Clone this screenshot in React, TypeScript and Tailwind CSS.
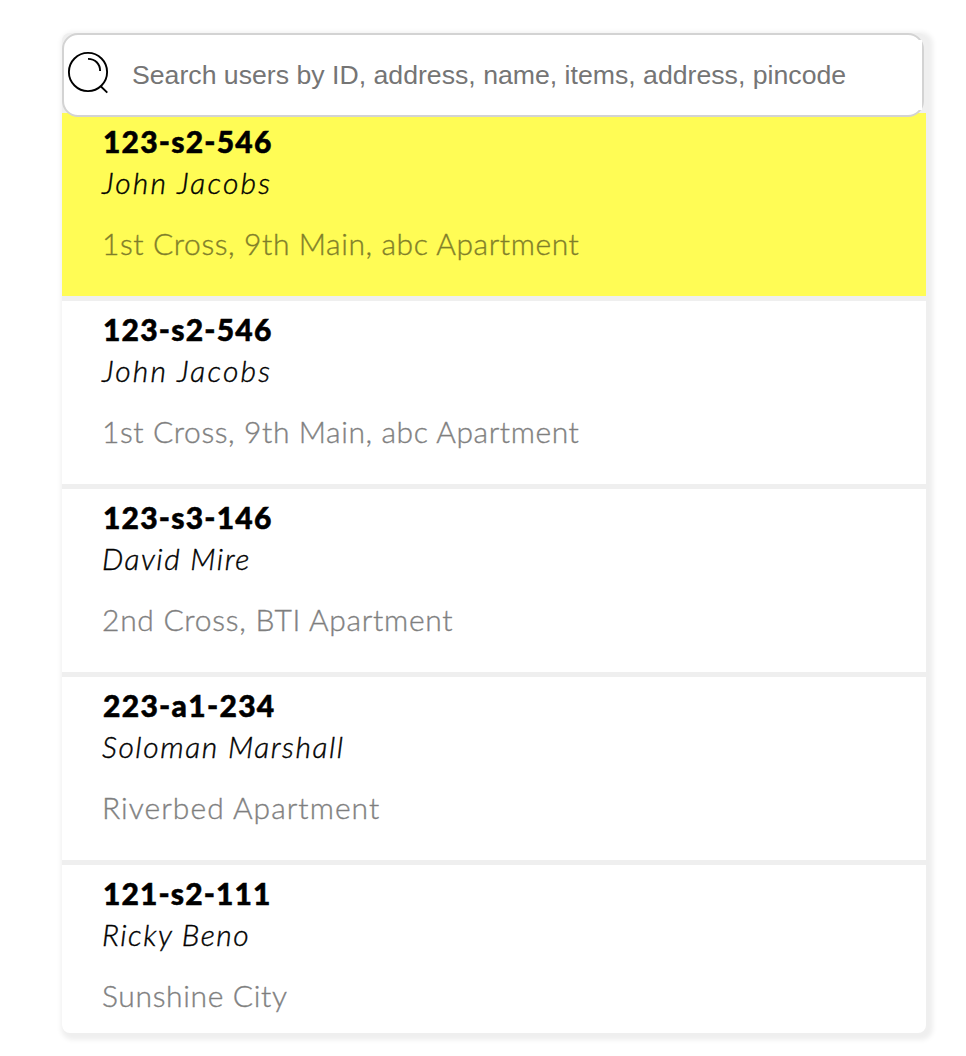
type Line = { text: string; tracking: string };
type User = { key: number; id: Line; name: Line; address: Line; active?: boolean };

const users: User[] = [
  {
    key: 1,
    id: { text: "123-s2-546", tracking: "tracking-[1.2px]" },
    name: { text: "John Jacobs", tracking: "tracking-[2.15px]" },
    address: { text: "1st Cross, 9th Main, abc Apartment", tracking: "tracking-[0.6px]" },
    active: true,
  },
  {
    key: 2,
    id: { text: "123-s2-546", tracking: "tracking-[1.2px]" },
    name: { text: "John Jacobs", tracking: "tracking-[2.15px]" },
    address: { text: "1st Cross, 9th Main, abc Apartment", tracking: "tracking-[0.6px]" },
  },
  {
    key: 3,
    id: { text: "123-s3-146", tracking: "tracking-[1.2px]" },
    name: { text: "David Mire", tracking: "tracking-[1.5px]" },
    address: { text: "2nd Cross, BTI Apartment", tracking: "tracking-[0.73px]" },
  },
  {
    key: 4,
    id: { text: "223-a1-234", tracking: "tracking-[1.3px]" },
    name: { text: "Soloman Marshall", tracking: "tracking-[1.58px]" },
    address: { text: "Riverbed Apartment", tracking: "tracking-[1.05px]" },
  },
  {
    key: 5,
    id: { text: "121-s2-111", tracking: "tracking-[1.1px]" },
    name: { text: "Ricky Beno", tracking: "tracking-[1.5px]" },
    address: { text: "Sunshine City", tracking: "tracking-[0.65px]" },
  },
];

function SearchIcon() {
  return (
    <svg width="44" height="44" viewBox="0 0 44 44" fill="none" stroke="#000" strokeWidth="1.9" className="shrink-0">
      <circle cx="22" cy="22" r="19.1" />
      <path d="M22 8.9c7.2 0 12.1 5 12.1 12.1M34.7 36.2l6.6 6.4" />
    </svg>
  );
}

function UserRow({ user }: { user: User }) {
  return (
    <li
      className={`flex h-[188px] flex-col border-b-[5px] border-[#efefef] pl-10 pt-2 text-[30px] last:h-[168px] last:rounded-b-lg last:border-b-0 ${
        user.active ? "bg-[#fffc55]" : "bg-white"
      }`}
    >
      <div className={`h-[41px] whitespace-nowrap pl-px font-black leading-[41px] text-black [-webkit-text-stroke:0.5px_#000] ${user.id.tracking}`}>
        {user.id.text}
      </div>
      <div className={`h-[41px] whitespace-nowrap font-light italic leading-[41px] text-black [-webkit-text-stroke:0.4px_#000] ${user.name.tracking}`}>
        {user.name.text}
      </div>
      <div
        className={`mt-5 h-[41px] whitespace-nowrap font-light leading-[41px] text-black opacity-50 [-webkit-text-stroke:0.4px_#000] ${user.address.tracking}`}
      >
        {user.address.text}
      </div>
    </li>
  );
}

export default function App() {
  return (
    <main className="min-h-[1056px] bg-white pl-[62px] pt-[33px] font-['Lato',sans-serif]">
      <section className="w-[864px] rounded-lg bg-[#efefef] shadow-[3px_3px_5px_4px_#efefef]">
        <div className="relative z-10 -mb-1 flex h-[84px] w-[862px] items-center rounded-2xl border-2 border-[#d3d3d3] bg-white">
          <div className="flex h-full w-12 items-start pl-0.5 pt-[15px]">
            <SearchIcon />
          </div>
          <input
            type="text"
            placeholder="Search users by ID, address, name, items, address, pincode"
            className="h-[70px] min-w-0 flex-1 bg-white pl-5 font-['Liberation_Sans',Arial,sans-serif] text-[26.67px] text-black outline-none placeholder:text-[#757575]"
          />
        </div>
        <ul>
          {users.map((user) => (
            <UserRow key={user.key} user={user} />
          ))}
        </ul>
      </section>
    </main>
  );
}
